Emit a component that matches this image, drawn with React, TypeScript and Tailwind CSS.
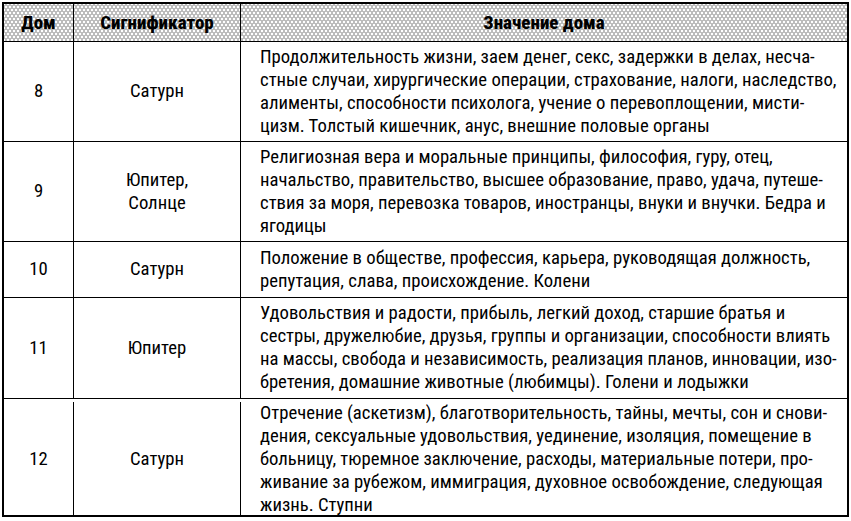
import React from "react";

type Row = { num: string; sig: string[]; lines: string[]; h: string };

const rows: Row[] = [
  {
    num: "8",
    sig: ["Сатурн"],
    h: "h-[100px]",
    lines: [
      "Продолжительность жизни, заем денег, секс, задержки в делах, несча-",
      "стные случаи, хирургические операции, страхование, налоги, наследство,",
      "алименты, способности психолога, учение о перевоплощении, мисти-",
      "цизм. Толстый кишечник, анус, внешние половые органы",
    ],
  },
  {
    num: "9",
    sig: ["Юпитер,", "Солнце"],
    h: "h-[100px]",
    lines: [
      "Религиозная вера и моральные принципы, философия, гуру, отец,",
      "начальство, правительство, высшее образование, право, удача, путеше-",
      "ствия за моря, перевозка товаров, иностранцы, внуки и внучки. Бедра и",
      "ягодицы",
    ],
  },
  {
    num: "10",
    sig: ["Сатурн"],
    h: "h-[56px]",
    lines: [
      "Положение в обществе, профессия, карьера, руководящая должность,",
      "репутация, слава, происхождение. Колени",
    ],
  },
  {
    num: "11",
    sig: ["Юпитер"],
    h: "h-[101px]",
    lines: [
      "Удовольствия и радости, прибыль, легкий доход, старшие братья и",
      "сестры, дружелюбие, друзья, группы и организации, способности влиять",
      "на массы, свобода и независимость, реализация планов, инновации, изо-",
      "бретения, домашние животные (любимцы). Голени и лодыжки",
    ],
  },
  {
    num: "12",
    sig: ["Сатурн"],
    h: "h-[117px] pt-[3px]",
    lines: [
      "Отречение (аскетизм), благотворительность, тайны, мечты, сон и снови-",
      "дения, сексуальные удовольствия, уединение, изоляция, помещение в",
      "больницу, тюремное заключение, расходы, материальные потери, про-",
      "живание за рубежом, иммиграция, духовное освобождение, следующая",
      "жизнь. Ступни",
    ],
  },
];

export default function App() {
  return (
    <div className="w-[851px] h-[521px] bg-white pt-[2px] pl-[2px] font-['Roboto_Condensed','Liberation_Sans',sans-serif] text-black">
      <div className="w-[847px] border-2 border-black">
        <div className="grid grid-cols-[69px_167px_1fr] h-[37px] bg-[#bcbcbc] bg-[radial-gradient(circle,#ffffff_0.9px,transparent_1.3px),radial-gradient(circle,#ffffff_0.9px,transparent_1.3px)] bg-[length:4px_6px] bg-[position:0_0,2px_3px] text-[19px] font-extrabold leading-none">
          <div className="flex items-center justify-center">Дом</div>
          <div className="flex items-center justify-center border-l border-black">Сигнификатор</div>
          <div className="flex items-center justify-center border-l border-black">Значение дома</div>
        </div>
        {rows.map((r) => (
          <div key={r.num} className={`grid grid-cols-[69px_167px_1fr] border-t border-black text-[18.7px] leading-[23px] ${r.h}`}>
            <div className="flex items-center justify-center">{r.num}</div>
            <div className="flex flex-col items-center justify-center border-l border-black">
              {r.sig.map((s) => (
                <div key={s}>{s}</div>
              ))}
            </div>
            <div className="flex flex-col justify-center border-l border-black pl-[19px] whitespace-nowrap">
              {r.lines.map((l) => (
                <div key={l}>{l}</div>
              ))}
            </div>
          </div>
        ))}
      </div>
    </div>
  );
}
